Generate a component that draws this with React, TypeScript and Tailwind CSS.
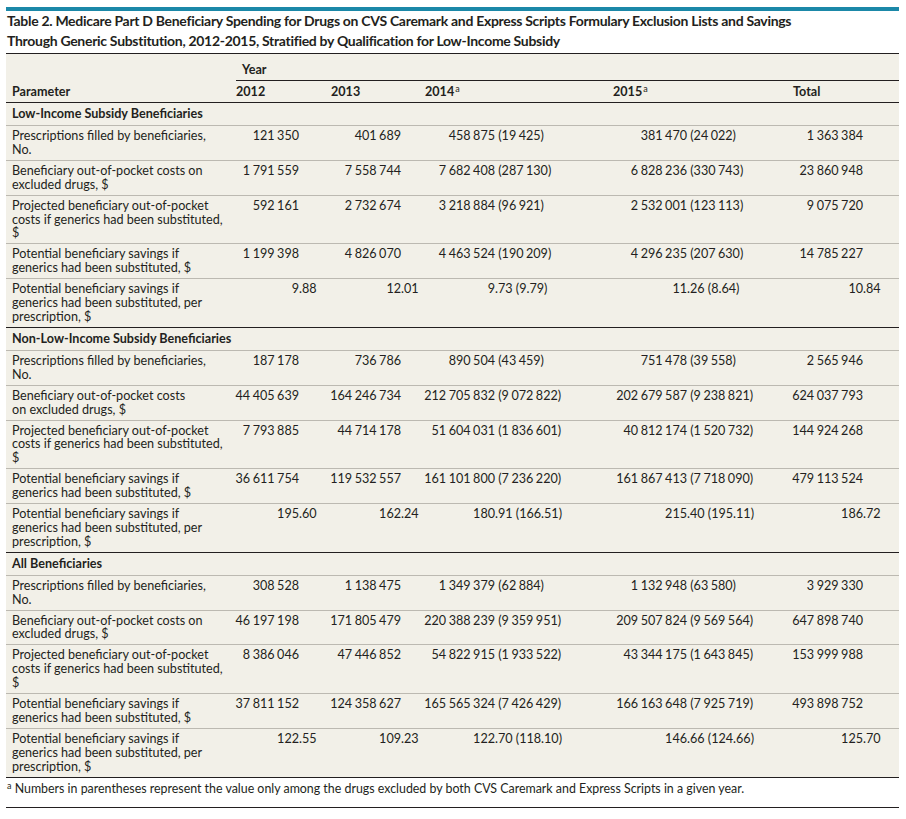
import React from "react";

type Row = { label: string; values: string[] };
type Section = { title: string; rows: Row[] };

const sections: Section[] = [
  {
    title: "Low-Income Subsidy Beneficiaries",
    rows: [
      { label: "Prescriptions filled by beneficiaries,\nNo.", values: ["121 350", "401 689", "458 875 (19 425)", "381 470 (24 022)", "1 363 384"] },
      { label: "Beneficiary out-of-pocket costs on\nexcluded drugs, $", values: ["1 791 559", "7 558 744", "7 682 408 (287 130)", "6 828 236 (330 743)", "23 860 948"] },
      { label: "Projected beneficiary out-of-pocket\ncosts if generics had been substituted,\n$", values: ["592 161", "2 732 674", "3 218 884 (96 921)", "2 532 001 (123 113)", "9 075 720"] },
      { label: "Potential beneficiary savings if\ngenerics had been substituted, $", values: ["1 199 398", "4 826 070", "4 463 524 (190 209)", "4 296 235 (207 630)", "14 785 227"] },
      { label: "Potential beneficiary savings if\ngenerics had been substituted, per\nprescription, $", values: ["9.88", "12.01", "9.73 (9.79)", "11.26 (8.64)", "10.84"] },
    ],
  },
  {
    title: "Non-Low-Income Subsidy Beneficiaries",
    rows: [
      { label: "Prescriptions filled by beneficiaries,\nNo.", values: ["187 178", "736 786", "890 504 (43 459)", "751 478 (39 558)", "2 565 946"] },
      { label: "Beneficiary out-of-pocket costs\non excluded drugs, $", values: ["44 405 639", "164 246 734", "212 705 832 (9 072 822)", "202 679 587 (9 238 821)", "624 037 793"] },
      { label: "Projected beneficiary out-of-pocket\ncosts if generics had been substituted,\n$", values: ["7 793 885", "44 714 178", "51 604 031 (1 836 601)", "40 812 174 (1 520 732)", "144 924 268"] },
      { label: "Potential beneficiary savings if\ngenerics had been substituted, $", values: ["36 611 754", "119 532 557", "161 101 800 (7 236 220)", "161 867 413 (7 718 090)", "479 113 524"] },
      { label: "Potential beneficiary savings if\ngenerics had been substituted, per\nprescription, $", values: ["195.60", "162.24", "180.91 (166.51)", "215.40 (195.11)", "186.72"] },
    ],
  },
  {
    title: "All Beneficiaries",
    rows: [
      { label: "Prescriptions filled by beneficiaries,\nNo.", values: ["308 528", "1 138 475", "1 349 379 (62 884)", "1 132 948 (63 580)", "3 929 330"] },
      { label: "Beneficiary out-of-pocket costs on\nexcluded drugs, $", values: ["46 197 198", "171 805 479", "220 388 239 (9 359 951)", "209 507 824 (9 569 564)", "647 898 740"] },
      { label: "Projected beneficiary out-of-pocket\ncosts if generics had been substituted,\n$", values: ["8 386 046", "47 446 852", "54 822 915 (1 933 522)", "43 344 175 (1 643 845)", "153 999 988"] },
      { label: "Potential beneficiary savings if\ngenerics had been substituted, $", values: ["37 811 152", "124 358 627", "165 565 324 (7 426 429)", "166 163 648 (7 925 719)", "493 898 752"] },
      { label: "Potential beneficiary savings if\ngenerics had been substituted, per\nprescription, $", values: ["122.55", "109.23", "122.70 (118.10)", "146.66 (124.66)", "125.70"] },
    ],
  },
];

// integer part is right-aligned in a box of this width, so decimals and parentheses line up
const intBox = ["w-[69px]", "w-[76px]", "w-[76px]", "w-[80px]", "w-[76px]"];

const grid = "grid grid-cols-[224px_95px_94px_188px_180px_112px]";

// digit groups are set apart by a narrow gap, not a full word space
function Groups({ text }: { text: string }) {
  const parts = text.split(/(?<=\d) (?=\d)/);
  return (
    <>
      {parts.map((p, i) => (
        <span key={i} className={i > 0 ? "ml-[2.5px]" : ""}>
          {p}
        </span>
      ))}
    </>
  );
}

function NumCell({ value, col }: { value: string; col: number }) {
  const dot = value.indexOf(".");
  const paren = value.indexOf(" (");
  const cuts = [dot, paren].filter((i) => i >= 0);
  const cut = cuts.length ? Math.min(...cuts) : value.length;
  return (
    <div className="flex">
      <div className={`${intBox[col]} shrink-0 flex justify-end whitespace-nowrap`}>
        <span>
          <Groups text={value.slice(0, cut)} />
        </span>
      </div>
      <div className="whitespace-pre">
        <Groups text={value.slice(cut)} />
      </div>
    </div>
  );
}

function Sup() {
  return <span className="relative -top-[4px] text-[9px] leading-none font-normal ml-[1px]">a</span>;
}

export default function App() {
  return (
    <div
      className="w-[906px] h-[819px] bg-white pl-[6px] pr-[7px] text-[#231f20]"
      style={{ fontFamily: "Lato, 'Liberation Sans', sans-serif" }}
    >
      <div className="mt-[7px] h-[4px] bg-[#1b88a8]" />
      <h1 className="pl-[1px] text-[14px] font-bold leading-[20px] tracking-[-0.3px] border-b border-[#231f20] pb-[2px]">
        Table 2. Medicare Part D Beneficiary Spending for Drugs on CVS Caremark and Express Scripts Formulary Exclusion Lists and Savings
        <br />
        Through Generic Substitution, 2012-2015, Stratified by Qualification for Low-Income Subsidy
      </h1>

      <div className="bg-[#f2f0e8] text-[12.6px] leading-[14px]">
        <div className="flex">
          <div className="w-[230px] shrink-0" />
          <div className="flex-1 border-b border-[#231f20] pt-[9px] pb-[3px] pl-[6px] font-bold">Year</div>
        </div>
        <div className={`${grid} border-b border-[#231f20] font-bold`}>
          <div className="pl-[6px] pt-[4px] pb-[3px]">Parameter</div>
          <div className="pl-[6px] pt-[4px] pb-[3px]">2012</div>
          <div className="pl-[6px] pt-[4px] pb-[3px]">2013</div>
          <div className="pl-[6px] pt-[4px] pb-[3px]">
            2014
            <Sup />
          </div>
          <div className="pl-[6px] pt-[4px] pb-[3px]">
            2015
            <Sup />
          </div>
          <div className="pl-[6px] pt-[4px] pb-[3px]">Total</div>
        </div>

        {sections.map((sec) => (
          <div key={sec.title}>
            <div className="border-b border-[#bcb9b1] pl-[6px] pt-[4px] pb-[4px] font-bold">{sec.title}</div>
            {sec.rows.map((row, i) => (
              <div
                key={i}
                className={`${grid} border-b leading-[13.9px] ${i === sec.rows.length - 1 ? "border-[#231f20]" : "border-[#bcb9b1]"}`}
              >
                <div className="pl-[6px] pt-[3px] pb-[3px] whitespace-pre-line">{row.label}</div>
                {row.values.map((v, c) => (
                  <div key={c} className="pt-[3px] pb-[3px]">
                    <NumCell value={v} col={c} />
                  </div>
                ))}
              </div>
            ))}
          </div>
        ))}
      </div>

      <p className="pl-[1px] pt-[4px] pb-[11px] text-[12.4px] leading-[14px] border-b border-[#231f20]">
        <span className="relative -top-[4px] text-[9px] leading-none">a</span> Numbers in parentheses represent the value only among the drugs excluded by both CVS Caremark and Express Scripts in a given year.
      </p>
    </div>
  );
}
